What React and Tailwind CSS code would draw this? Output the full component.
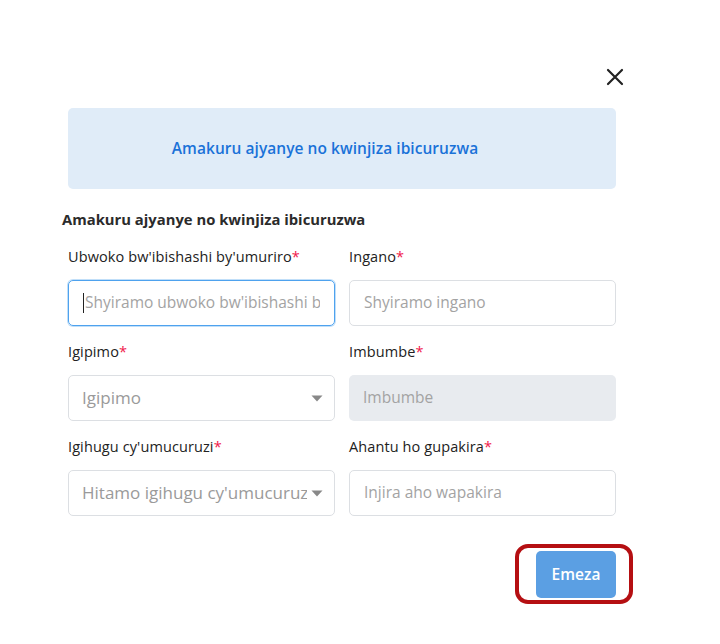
import React from "react";

const font = { fontFamily: "'Open Sans', 'Noto Sans', sans-serif" };

function Label({ children }) {
  return (
    <div className="h-5 text-[14.5px] leading-5 text-[#222] mb-[13px] whitespace-nowrap tracking-[0.1px]">
      {children}
      <span className="text-[#f0174a]">*</span>
    </div>
  );
}

function Caret() {
  return (
    <svg width="12" height="7" viewBox="0 0 12 7" className="shrink-0 ml-[4px]">
      <path d="M0.5 0.5 L11.5 0.5 L6 6.5 Z" fill="#888" />
    </svg>
  );
}

export default function App() {
  return (
    <div className="w-[720px] h-[644px] bg-white relative" style={font}>
      <div className="pt-[66px] pl-[62px] pr-[104px]">
        <div className="flex justify-end h-[22px] mr-[-10px]">
          <svg width="22" height="22" viewBox="0 0 22 22">
            <path d="M4 4 L18 18 M18 4 L4 18" stroke="#222" strokeWidth="2.2" strokeLinecap="round" />
          </svg>
        </div>
        <div className="mt-[20px] ml-[6px] h-[81px] rounded-[5px] bg-[#e0ecf8] flex items-center justify-center pr-[34px]">
          <span className="text-[15.5px] font-semibold text-[#1a72d8] tracking-[0.05px]">
            Amakuru ajyanye no kwinjiza ibicuruzwa
          </span>
        </div>
        <div className="mt-[20px] text-[14.8px] font-bold text-[#2b2b2b] leading-5">
          Amakuru ajyanye no kwinjiza ibicuruzwa
        </div>
        <div className="ml-[6px] mt-[18px] grid grid-cols-2 gap-x-[14px] gap-y-[16px]">
          <div>
            <Label>Ubwoko bw'ibishashi by'umuriro</Label>
            <div className="h-[46px] rounded-[5px] border border-[#4ea2ee] shadow-[0_0_0_1px_rgba(78,162,238,0.35)] flex items-center px-[14px] text-[15.5px] text-[#a3a3a3] overflow-hidden whitespace-nowrap">
              <span className="w-[1px] h-[20px] bg-[#222] mr-[1px] shrink-0" />
              <span className="flex-1 min-w-0 overflow-hidden">Shyiramo ubwoko bw'ibishashi by'umuriro</span>
            </div>
          </div>
          <div>
            <Label>Ingano</Label>
            <div className="h-[46px] rounded-[5px] border border-[#dcdfe3] flex items-center px-[14px] text-[15.5px] text-[#a3a3a3]">
              Shyiramo ingano
            </div>
          </div>
          <div>
            <Label>Igipimo</Label>
            <div className="h-[46px] rounded-[5px] border border-[#dcdfe3] flex items-center pl-[13px] pr-[11px] text-[17px] text-[#9a9a9a]">
              <span className="flex-1 min-w-0 overflow-hidden whitespace-nowrap">Igipimo</span>
              <Caret />
            </div>
          </div>
          <div>
            <Label>Imbumbe</Label>
            <div className="h-[46px] rounded-[5px] bg-[#e8ebef] flex items-center px-[14px] text-[15.5px] text-[#a3a3a3]">
              Imbumbe
            </div>
          </div>
          <div>
            <Label>Igihugu cy'umucuruzi</Label>
            <div className="h-[46px] rounded-[5px] border border-[#dcdfe3] flex items-center pl-[13px] pr-[11px] text-[17px] text-[#9a9a9a]">
              <span className="flex-1 min-w-0 overflow-hidden whitespace-nowrap">Hitamo igihugu cy'umucuruzi</span>
              <Caret />
            </div>
          </div>
          <div>
            <Label>Ahantu ho gupakira</Label>
            <div className="h-[46px] rounded-[5px] border border-[#dcdfe3] flex items-center px-[14px] text-[15.5px] text-[#a3a3a3]">
              Injira aho wapakira
            </div>
          </div>
        </div>
        <div className="mt-[35px] flex justify-end">
          <button className="w-[80px] h-[47px] rounded-[5px] bg-[#5b9fe3] text-white text-[15.5px] font-semibold">
            Emeza
          </button>
        </div>
      </div>
      <div className="absolute left-[515px] top-[544px] w-[118px] h-[60px] rounded-[13px] border-4 border-[#b50f12] pointer-events-none" />
    </div>
  );
}
